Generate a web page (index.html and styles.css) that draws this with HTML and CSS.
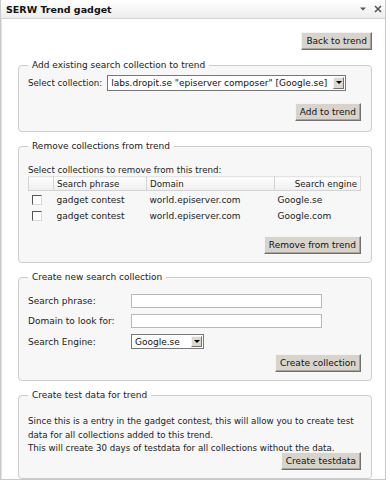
FILE: index.html
```html
<!DOCTYPE html>
<html lang="en">
<head>
    <meta charset="UTF-8">
    <title>SERW Trend gadget</title>
    <link rel="stylesheet" href="styles.css">
</head>
<body>
    <div class="gadget">
        <div class="gadget-head">
            <span class="gadget-title">SERW Trend gadget</span>
            <span class="gadget-tools">
                <svg width="8" height="6" viewBox="0 0 8 6"><path d="M1 1.5h6L4 4.5z" fill="#555"/></svg>
                <svg width="8" height="8" viewBox="0 0 8 8"><path d="M1 1l6 6M7 1L1 7" stroke="#555" stroke-width="1.6"/></svg>
            </span>
        </div>

        <div class="gadget-body">
            <div class="actions top-actions">
                <button class="btn">Back to trend</button>
            </div>

            <fieldset class="box box-add">
                <legend>Add existing search collection to trend</legend>
                <div class="row">
                    <label>Select collection:</label>
                    <div class="select select-wide">
                        <span class="select-value">labs.dropit.se "episerver composer" [Google.se]</span>
                        <span class="select-arrow"></span>
                    </div>
                </div>
                <div class="actions">
                    <button class="btn">Add to trend</button>
                </div>
            </fieldset>

            <fieldset class="box box-remove">
                <legend>Remove collections from trend</legend>
                <p class="hint">Select collections to remove from this trend:</p>
                <table class="grid">
                    <thead>
                        <tr>
                            <th class="col-check"></th>
                            <th class="col-phrase">Search phrase</th>
                            <th class="col-domain">Domain</th>
                            <th class="col-engine">Search engine</th>
                        </tr>
                    </thead>
                    <tbody>
                        <tr>
                            <td><span class="check"></span></td>
                            <td>gadget contest</td>
                            <td>world.episerver.com</td>
                            <td>Google.se</td>
                        </tr>
                        <tr>
                            <td><span class="check"></span></td>
                            <td>gadget contest</td>
                            <td>world.episerver.com</td>
                            <td>Google.com</td>
                        </tr>
                    </tbody>
                </table>
                <div class="actions">
                    <button class="btn">Remove from trend</button>
                </div>
            </fieldset>

            <fieldset class="box box-create">
                <legend>Create new search collection</legend>
                <div class="form-grid">
                    <label>Search phrase:</label>
                    <input type="text" class="text-input">
                    <label>Domain to look for:</label>
                    <input type="text" class="text-input">
                    <label>Search Engine:</label>
                    <div class="select select-small">
                        <span class="select-value">Google.se</span>
                        <span class="select-arrow"></span>
                    </div>
                </div>
                <div class="actions">
                    <button class="btn">Create collection</button>
                </div>
            </fieldset>

            <fieldset class="box box-test">
                <legend>Create test data for trend</legend>
                <p class="info">Since this is a entry in the gadget contest, this will allow you to create test data for all collections added to this trend.<br>This will create 30 days of testdata for all collections without the data.</p>
                <div class="actions">
                    <button class="btn">Create testdata</button>
                </div>
            </fieldset>
        </div>
    </div>
</body>
</html>
```

FILE: styles.css
```css
body {
    margin: 0;
    padding: 0;
    background: #ffffff;
    font-family: "DejaVu Sans", Verdana, sans-serif;
    font-size: 8.7px;
    color: #222;
}

.gadget {
    width: 386px;
    height: 480px;
    box-sizing: border-box;
    border: 1px solid #c9c9c9;
    border-top: none;
    overflow: hidden;
}

.gadget-head {
    height: 18px;
    display: flex;
    align-items: center;
    justify-content: space-between;
    padding: 0 3px 0 5px;
    background: linear-gradient(#ffffff, #ededed);
    border-bottom: 1px solid #d0d0d0;
}

.gadget-title {
    font-weight: bold;
    font-size: 9.5px;
    color: #111;
}

.gadget-tools {
    display: flex;
    align-items: center;
    gap: 7px;
}

.gadget-body {
    padding: 13px 13px 0 16px;
    border-left: 1px solid #e2e2e2;
}

.actions {
    display: flex;
    justify-content: flex-end;
}

.top-actions {
    margin-bottom: 10px;
}

.btn {
    font-family: inherit;
    font-size: 9px;
    color: #111;
    background: #d8d4cc;
    border: 1px solid;
    border-color: #f4f4f4 #707070 #707070 #f4f4f4;
    box-shadow: inset -1px -1px 0 #a8a49c;
    height: 18px;
    padding: 0 4px;
    margin: 0;
}

.box {
    margin: 0 0 9px 0;
    padding: 2px 10px 8px 9px;
    border: 1px solid #cdcdcd;
    border-radius: 4px;
    background: #f7f7f7;
}

.box legend {
    margin-left: 0;
    padding: 0 4px;
    font-size: 9px;
}

.box-add {
    padding-bottom: 10px;
}

.row {
    display: flex;
    align-items: center;
    gap: 5px;
    margin-top: 3px;
    margin-bottom: 12px;
}

.select {
    display: flex;
    align-items: center;
    height: 16px;
    box-sizing: border-box;
    background: #fff;
    border: 1px solid #777;
    font-size: 9px;
    color: #111;
}

.select-value {
    flex: 1;
    padding-left: 3px;
    white-space: nowrap;
    overflow: hidden;
}

.select-arrow {
    width: 11px;
    height: 12px;
    margin: 1px;
    background: #dcd8d0;
    border: 1px solid;
    border-color: #f4f4f4 #707070 #707070 #f4f4f4;
    box-sizing: border-box;
    position: relative;
}

.select-arrow::after {
    content: "";
    position: absolute;
    left: 2px;
    top: 3px;
    border-left: 3px solid transparent;
    border-right: 3px solid transparent;
    border-top: 3px solid #000;
}

.select-wide {
    width: 239px;
}

.select-small {
    width: 73px;
    height: 15px;
}

.select-small .select-arrow {
    height: 11px;
}

.hint {
    margin: 12px 0 1px 0;
}

.grid {
    width: 100%;
    table-layout: fixed;
    border-collapse: collapse;
    margin-bottom: 12px;
}

.grid th {
    font-weight: normal;
    text-align: left;
    height: 13px;
    padding: 0 3px;
    background: linear-gradient(#ffffff, #eeeeee);
    border: 1px solid #d4d4d4;
    border-top-color: #e4e4e4;
    white-space: nowrap;
}

.grid th.col-check {
    width: 24px;
    padding: 0;
}

.grid th.col-phrase {
    width: 93px;
    padding: 0 3px;
    box-sizing: border-box;
}

.grid th.col-domain {
    width: 128px;
    box-sizing: border-box;
}

.grid th.col-engine {
    text-align: right;
}

.grid td {
    height: 16px;
    padding: 0 3px;
    font-size: 9px;
    white-space: nowrap;
}

.grid tbody tr:first-child td {
    padding-top: 1px;
}

.check {
    display: block;
    width: 10px;
    height: 10px;
    box-sizing: border-box;
    background: #fff;
    border: 1px solid;
    border-color: #555 #d8d8d8 #d8d8d8 #555;
}

.form-grid {
    display: grid;
    grid-template-columns: 103px 191px;
    row-gap: 6px;
    align-items: center;
    margin: 10px 0 5px 0;
}

.form-grid label {
    font-size: 9px;
}

.text-input {
    width: 191px;
    height: 14px;
    box-sizing: border-box;
    border: 1px solid #b8b8b8;
    background: #fff;
    margin: 0;
    padding: 0;
}

.info {
    margin: 13px 0 -4px 0;
    font-size: 8.7px;
    line-height: 13.5px;
}
```
